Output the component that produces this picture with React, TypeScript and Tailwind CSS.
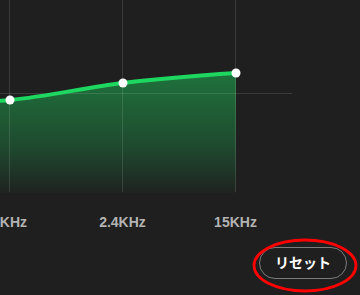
const points = [
  { x: 10, y: 100 },
  { x: 123, y: 83 },
  { x: 236, y: 73 },
];

const curve =
  "M -103 104 C -65.3 103.2 -27.7 103.5 10 100 C 47.7 96.5 85.3 87.5 123 83 C 160.7 78.5 198.3 75.5 236 73";

const bands = ["1KHz", "2.4KHz", "15KHz"];

export default function App() {
  return (
    <div className="relative w-[360px] h-[295px] overflow-hidden bg-[#1f1f1f] font-['Liberation_Sans','Noto_Sans_CJK_JP',sans-serif]">
      {/* Chart */}
      <svg className="block" width="360" height="193" viewBox="0 0 360 193">
        <defs>
          <linearGradient id="eqFill" x1="0" y1="73" x2="0" y2="193" gradientUnits="userSpaceOnUse">
            <stop offset="0" stopColor="#1ed760" stopOpacity="0.45" />
            <stop offset="0.6" stopColor="#1ed760" stopOpacity="0.24" />
            <stop offset="1" stopColor="#1ed760" stopOpacity="0.02" />
          </linearGradient>
        </defs>
        <path d={`${curve} L 236 193 L -103 193 Z`} fill="url(#eqFill)" />
        <line x1="0" y1="93.5" x2="292" y2="93.5" stroke="rgba(255,255,255,0.12)" strokeWidth="1" />
        {points.map((p) => (
          <line
            key={p.x}
            x1={p.x - 0.5}
            y1="0"
            x2={p.x - 0.5}
            y2="192"
            stroke="rgba(255,255,255,0.12)"
            strokeWidth="1"
          />
        ))}
        <path d={curve} fill="none" stroke="#1ed760" strokeWidth="4" strokeLinecap="round" />
        {points.map((p) => (
          <circle key={p.x} cx={p.x} cy={p.y} r="4.5" fill="#ffffff" />
        ))}
      </svg>

      {/* Band labels */}
      <div className="flex ml-[-47px] mt-[19px]">
        {bands.map((b) => (
          <div key={b} className="w-[113px] shrink-0 text-center text-sm leading-5 font-bold text-[#b3b3b3]">
            {b}
          </div>
        ))}
      </div>

      {/* Reset */}
      <div className="flex justify-end pr-[13px] mt-[15px]">
        <button className="h-8 w-[88px] rounded-full border border-[#7c7c7c] text-sm font-bold text-white">
          リセット
        </button>
      </div>

      {/* Annotation */}
      <svg className="absolute left-[250px] top-[236px] pointer-events-none" width="110" height="59" viewBox="0 0 110 59">
        <ellipse cx="55" cy="29.5" rx="51" ry="25.5" fill="none" stroke="#ff0000" strokeWidth="2.8" />
      </svg>
    </div>
  );
}
